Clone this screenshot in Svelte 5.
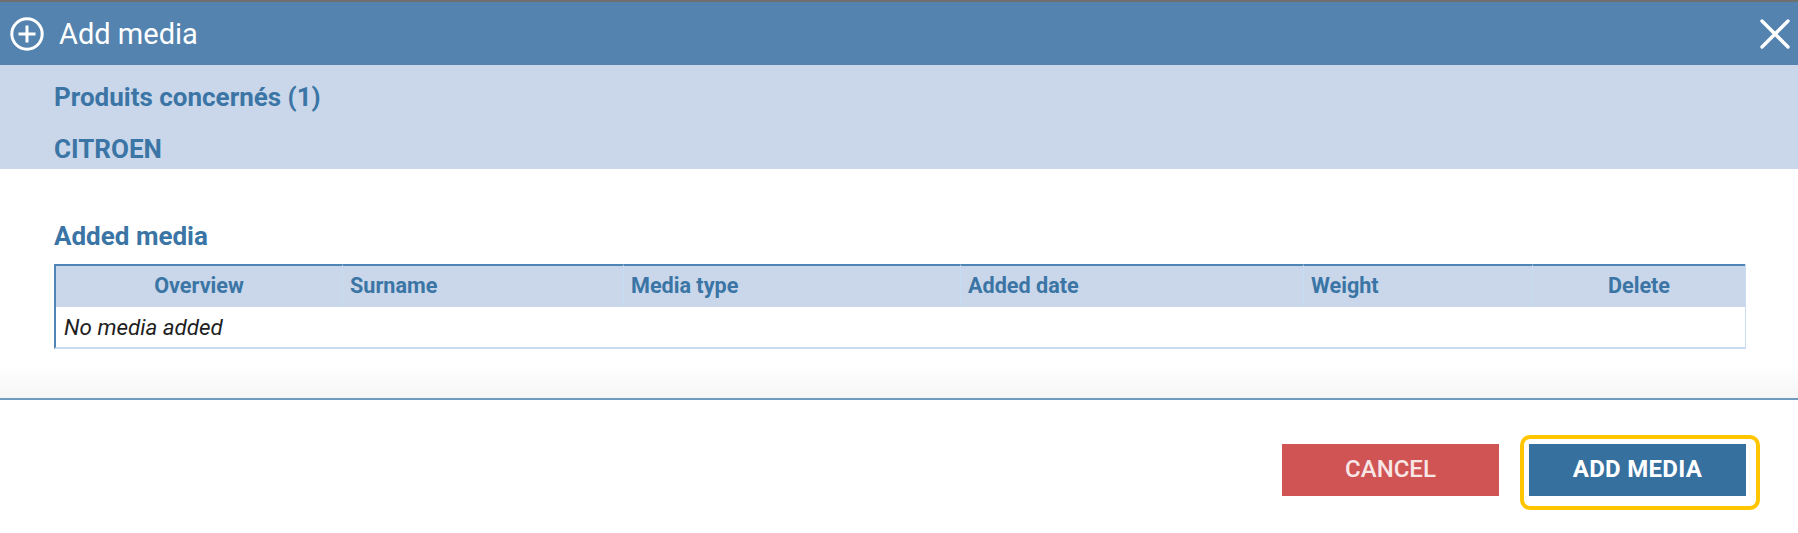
<script>
  const columns = [
    { label: 'Overview', width: 288, center: true },
    { label: 'Surname', width: 281 },
    { label: 'Media type', width: 337 },
    { label: 'Added date', width: 343 },
    { label: 'Weight', width: 229 },
    { label: 'Delete', width: 213, center: true }
  ];
</script>

<div class="modal">
  <header class="title-bar">
    <div class="title">
      <svg class="plus" width="34" height="34" viewBox="0 0 34 34" aria-hidden="true">
        <circle cx="17" cy="17" r="15.2" fill="none" stroke="#fff" stroke-width="3" />
        <path d="M17 8.5v17M8.5 17h17" fill="none" stroke="#fff" stroke-width="3" />
      </svg>
      <span>Add media</span>
    </div>
    <svg class="close" width="30" height="30" viewBox="0 0 30 30" aria-hidden="true">
      <path d="M2 2l26 26M28 2L2 28" fill="none" stroke="#fff" stroke-width="3.4" stroke-linecap="round" />
    </svg>
  </header>

  <section class="products">
    <div class="line first">Produits concernés (1)</div>
    <div class="line">CITROEN</div>
  </section>

  <section class="body">
    <h2>Added media</h2>
    <div class="table">
      <div class="head">
        {#each columns as col}
          <div class="th" class:center={col.center} style="width:{col.width}px">{col.label}</div>
        {/each}
      </div>
      <div class="row">No media added</div>
    </div>
  </section>

  <footer class="actions">
    <button class="btn cancel">CANCEL</button>
    <span class="focus"><button class="btn add">ADD MEDIA</button></span>
  </footer>
</div>

<style>
  :global(body) {
    margin: 0;
    background: #fff;
  }
  .modal {
    width: 1798px;
    height: 533px;
    overflow: hidden;
    font-family: Roboto, "Liberation Sans", sans-serif;
    color: #3a75a5;
    background: #fff;
  }
  .title-bar {
    box-sizing: border-box;
    height: 65px;
    border-top: 2px solid #6f6f6f;
    background: #5383ae;
    display: flex;
    align-items: center;
    justify-content: space-between;
    padding: 0 8px 0 10px;
    color: #fff;
  }
  .title {
    display: flex;
    align-items: center;
    gap: 15px;
    font-size: 29px;
  }
  .plus, .close {
    display: block;
  }
  .products {
    box-sizing: border-box;
    height: 104px;
    background: #cad7ea;
    padding: 18px 0 0 54px;
    font-size: 26px;
    font-weight: 700;
  }
  .line {
    height: 28px;
    line-height: 28px;
  }
  .line.first {
    margin-bottom: 24px;
  }
  .body {
    box-sizing: border-box;
    height: 231px;
    padding: 53px 0 0 54px;
    border-bottom: 2px solid #709bbd;
    background: linear-gradient(to bottom, #fff 0, #fff 195px, #f6f6f6 229px);
  }
  h2 {
    margin: 0 0 14px;
    font-size: 26px;
    line-height: 28px;
    font-weight: 700;
  }
  .table {
    width: 1691px;
    border-right: 1px solid #c9dcf0;
  }
  .head {
    display: flex;
    height: 43px;
    background: #cad7ea;
    box-sizing: border-box;
  }
  .th {
    box-sizing: border-box;
    padding: 0 7px;
    font-size: 21.6px;
    font-weight: 700;
    line-height: 39px;
    border-top: 2px solid #4f86b5;
    border-left: 1px solid #c6dcf2;
  }
  .th:first-child {
    border-left: 2px solid #4f86b5;
  }
  .center {
    text-align: center;
  }
  .row {
    box-sizing: border-box;
    height: 42px;
    padding-left: 8px;
    border-left: 2px solid #4f86b5;
    border-bottom: 2px solid #c9dcf0;
    background: #fff;
    font-size: 22.4px;
    line-height: 40px;
    font-style: italic;
    color: #1f1f1f;
  }
  .actions {
    display: flex;
    align-items: flex-start;
    justify-content: flex-end;
    gap: 21px;
    padding: 35px 38px 0 0;
  }
  .btn {
    display: block;
    width: 217px;
    height: 52px;
    border: 0;
    border-radius: 0;
    padding: 0 0 2px;
    color: #fff;
    font-family: inherit;
    font-size: 24px;
  }
  .cancel {
    background: #cf5453;
    font-weight: 500;
    color: #f8e6e6;
    margin-top: 9px;
  }
  .add {
    background: #35709f;
    font-weight: 700;
    letter-spacing: 0.3px;
  }
  .focus {
    display: block;
    padding: 5px 10px 10px 5px;
    border: 4px solid #ffc600;
    border-radius: 10px;
  }
</style>
